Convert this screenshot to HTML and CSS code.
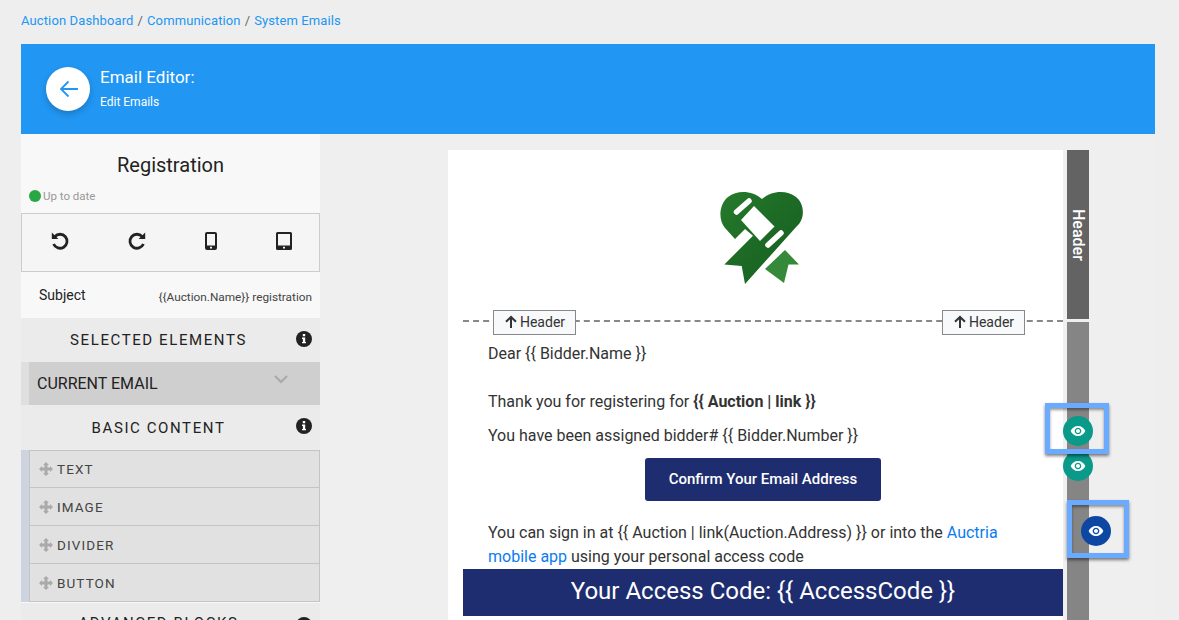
FILE: index.html
```html
<!DOCTYPE html>
<html lang="en">
<head>
  <meta charset="UTF-8">
  <title>Email Editor</title>
  <link rel="stylesheet" href="styles.css">
</head>
<body>
  <div class="breadcrumb">
    <a href="#">Auction Dashboard</a><span class="sep">/</span><a href="#">Communication</a><span class="sep">/</span><a href="#">System Emails</a>
  </div>

  <header class="banner">
    <a class="back" href="#">
      <svg width="18" height="18" viewBox="0 0 18 18" fill="none" stroke="#2196f3" stroke-width="1.800"><path d="M18 9H1.500M8.500 1.500L1 9l7.500 7.500"/></svg>
    </a>
    <div class="banner-text">
      <div class="banner-title">Email Editor:</div>
      <div class="banner-sub">Edit Emails</div>
    </div>
  </header>

  <div class="workspace">
    <aside class="sidebar">
      <h2 class="doc-name">Registration</h2>
      <div class="status"><span class="dot"></span>Up to date</div>
      <div class="toolbar">
        <svg width="20" height="20" viewBox="0 0 20 20" fill="none" stroke="#222" stroke-width="2.800"><path d="M4.800 5.600A7 7 0 1 1 3.600 13"/><path d="M1.800 1.500v6.600h6.600" stroke="none" fill="#222"/></svg>
        <svg width="20" height="20" viewBox="0 0 20 20" fill="none" stroke="#222" stroke-width="2.800"><path d="M15.200 5.600A7 7 0 1 0 16.400 13"/><path d="M18.200 1.500v6.600h-6.600" stroke="none" fill="#222"/></svg>
        <svg width="14" height="20" viewBox="0 0 14 20"><path fill="#222" fill-rule="evenodd" d="M3 1h8a2 2 0 0 1 2 2v14a2 2 0 0 1-2 2H3a2 2 0 0 1-2-2V3a2 2 0 0 1 2-2zm0 2v11.500h8V3zM6 15.800v1.700h2v-1.700z"/></svg>
        <svg width="18" height="20" viewBox="0 0 18 20"><path fill="#222" fill-rule="evenodd" d="M2.500 1h13A1.500 1.500 0 0 1 17 2.500v15a1.500 1.500 0 0 1-1.500 1.500h-13A1.500 1.500 0 0 1 1 17.500v-15A1.500 1.500 0 0 1 2.500 1zM3 3v11.500h12V3zM8 15.800v1.700h2v-1.700z"/></svg>
      </div>
      <div class="subject">
        <span>Subject</span>
        <span class="subject-value">{{Auction.Name}} registration</span>
      </div>

      <div class="section-head">
        <span>SELECTED ELEMENTS</span>
        <svg class="info" width="16" height="16" viewBox="0 0 16 16"><circle cx="8" cy="8" r="8" fill="#222"/><path fill="#fff" d="M6.800 3h2.400v2.200H6.800zM6 6.500h3.200v4.400H10v1.400H6v-1.400h.9V7.900H6z"/></svg>
      </div>
      <div class="current">
        <span>CURRENT EMAIL</span>
        <svg width="14" height="9" viewBox="0 0 14 9" fill="none" stroke="#aaa" stroke-width="2.200"><path d="M1 1l6 6 6-6"/></svg>
      </div>

      <div class="section-head">
        <span>BASIC CONTENT</span>
        <svg class="info" width="16" height="16" viewBox="0 0 16 16"><circle cx="8" cy="8" r="8" fill="#222"/><path fill="#fff" d="M6.800 3h2.400v2.200H6.800zM6 6.500h3.200v4.400H10v1.400H6v-1.400h.9V7.900H6z"/></svg>
      </div>
      <ul class="blocks">
        <li><svg class="move" width="14" height="14" viewBox="0 0 14 14"><path fill="#aaa" d="M7 0l3 3H8.500v2.500H11V4l3 3-3 3V8.500H8.500V11H10l-3 3-3-3h1.500V8.500H3V10L0 7l3-3v1.500h2.500V3H4z"/></svg>TEXT</li>
        <li><svg class="move" width="14" height="14" viewBox="0 0 14 14"><path fill="#aaa" d="M7 0l3 3H8.500v2.500H11V4l3 3-3 3V8.500H8.500V11H10l-3 3-3-3h1.500V8.500H3V10L0 7l3-3v1.500h2.500V3H4z"/></svg>IMAGE</li>
        <li><svg class="move" width="14" height="14" viewBox="0 0 14 14"><path fill="#aaa" d="M7 0l3 3H8.500v2.500H11V4l3 3-3 3V8.500H8.500V11H10l-3 3-3-3h1.500V8.500H3V10L0 7l3-3v1.500h2.500V3H4z"/></svg>DIVIDER</li>
        <li><svg class="move" width="14" height="14" viewBox="0 0 14 14"><path fill="#aaa" d="M7 0l3 3H8.500v2.500H11V4l3 3-3 3V8.500H8.500V11H10l-3 3-3-3h1.500V8.500H3V10L0 7l3-3v1.500h2.500V3H4z"/></svg>BUTTON</li>
      </ul>
      <div class="section-head section-last">
        <span>ADVANCED BLOCKS</span>
        <svg class="info" width="16" height="16" viewBox="0 0 16 16"><circle cx="8" cy="8" r="8" fill="#222"/><path fill="#fff" d="M6.800 3h2.400v2.200H6.800zM6 6.500h3.200v4.400H10v1.400H6v-1.400h.9V7.900H6z"/></svg>
      </div>
    </aside>

    <main class="canvas">
      <div class="email">
        <div class="email-logo">
          <svg width="84" height="94" viewBox="0 0 84 94">
            <defs>
              <linearGradient id="heart" x1="0" y1="0" x2="1" y2="1">
                <stop offset="0" stop-color="#267a2c"/>
                <stop offset="0.5" stop-color="#1c6a25"/>
                <stop offset="1" stop-color="#17601f"/>
              </linearGradient>
            </defs>
            <path fill="#348a3a" d="M65 59L79 73.500H68.500L64 92L45 78z"/>
            <path fill="url(#heart)" d="M15 48L5 37C-2 29 -1 13 8 6C18 -2 33 0 42 8C51 0 66 -2 76 6C85 13 85 28 77 35L25 93L21.700 75L4.300 73.500L33 44.700L25 38z"/>
            <path fill="#fff" d="M21 29L34 15L54.500 35.500L40 50z"/>
            <path fill="none" stroke="#fff" stroke-width="5.500" stroke-linecap="round" d="M16.500 21L29 10M48 54L61 42"/>
          </svg>
        </div>
        <div class="marker">
          <span class="marker-tag"><svg width="14" height="14" viewBox="0 0 14 14" fill="none" stroke="#333" stroke-width="2"><path d="M7 13V2M2 6.800L7 2l5 4.800"/></svg>Header</span>
          <span class="marker-tag"><svg width="14" height="14" viewBox="0 0 14 14" fill="none" stroke="#333" stroke-width="2"><path d="M7 13V2M2 6.800L7 2l5 4.800"/></svg>Header</span>
        </div>
        <div class="email-body">
          <p class="dear">Dear {{ Bidder.Name }}</p>
          <p class="thanks">Thank you for registering for <b>{{ Auction | link }}</b></p>
          <p class="assigned">You have been assigned bidder# {{ Bidder.Number }}</p>
          <a class="confirm" href="#">Confirm Your Email Address</a>
          <p class="signin">You can sign in at {{ Auction | link(Auction.Address) }} or into the <a href="#">Auctria mobile app</a> using your personal access code</p>
        </div>
        <div class="access-code">Your Access Code: {{ AccessCode }}</div>
      </div>
      <div class="rail">
        <div class="rail-header">Header</div>
        <div class="rail-body"></div>
      </div>
    </main>
  </div>

  <span class="eye eye-one"><svg width="16" height="16" viewBox="0 0 24 24"><path fill="#fff" fill-rule="evenodd" d="M12 4.500C7 4.500 2.730 7.610 1 12c1.730 4.390 6 7.500 11 7.500s9.270-3.110 11-7.500c-1.730-4.390-6-7.500-11-7.500zM12 17c-2.760 0-5-2.240-5-5s2.240-5 5-5 5 2.240 5 5-2.240 5-5 5zm0-8c-1.660 0-3 1.340-3 3s1.340 3 3 3 3-1.340 3-3-1.340-3-3-3z"/></svg></span>
  <span class="eye eye-two"><svg width="16" height="16" viewBox="0 0 24 24"><path fill="#fff" fill-rule="evenodd" d="M12 4.500C7 4.500 2.730 7.610 1 12c1.730 4.390 6 7.500 11 7.500s9.270-3.110 11-7.500c-1.730-4.390-6-7.500-11-7.500zM12 17c-2.760 0-5-2.240-5-5s2.240-5 5-5 5 2.240 5 5-2.240 5-5 5zm0-8c-1.660 0-3 1.340-3 3s1.340 3 3 3 3-1.340 3-3-1.340-3-3-3z"/></svg></span>
  <span class="eye eye-three"><svg width="16" height="16" viewBox="0 0 24 24"><path fill="#fff" fill-rule="evenodd" d="M12 4.500C7 4.500 2.730 7.610 1 12c1.730 4.390 6 7.500 11 7.500s9.270-3.110 11-7.500c-1.730-4.390-6-7.500-11-7.500zM12 17c-2.760 0-5-2.240-5-5s2.240-5 5-5 5 2.240 5 5-2.240 5-5 5zm0-8c-1.660 0-3 1.340-3 3s1.340 3 3 3 3-1.340 3-3-1.340-3-3-3z"/></svg></span>
  <span class="callout callout-one"></span>
  <span class="callout callout-two"></span>
</body>
</html>
```

FILE: styles.css
```css
html, body {
  height: 620px;
  overflow: hidden;
}

body {
  margin: 0;
  padding: 0 24px 0 21px;
  position: relative;
  background-color: #eeeeee;
  font-family: Roboto, "Liberation Sans", sans-serif;
  color: #333;
}

a {
  text-decoration: none;
}

.breadcrumb {
  height: 44px;
  display: flex;
  align-items: center;
  padding-bottom: 3px;
  box-sizing: border-box;
  font-size: 13px;
  letter-spacing: 0.12px;
}

.breadcrumb a {
  color: #2196f3;
}

.sep {
  margin: 0 4px;
  color: #666;
}

.banner {
  height: 90px;
  display: flex;
  align-items: center;
  gap: 10px;
  padding-left: 25px;
  background-color: #2196f3;
  color: white;
}

.back {
  width: 44px;
  height: 44px;
  border-radius: 50%;
  background: white;
  display: flex;
  align-items: center;
  justify-content: center;
  padding-left: 2px;
  box-sizing: border-box;
  box-shadow: 0 3px 6px rgba(0,0,0,0.2);
}

.banner-text {
  padding-bottom: 2px;
}

.banner-title {
  font-size: 17px;
  line-height: 20px;
  margin-bottom: 7px;
}

.banner-sub {
  font-size: 12px;
  line-height: 16px;
}

.workspace {
  display: flex;
  background-color: #efefef;
}

.sidebar {
  width: 299px;
  flex-shrink: 0;
  background-color: #f8f8f8;
}

.doc-name {
  margin: 0;
  padding-top: 18px;
  font-size: 20px;
  line-height: 26px;
  font-weight: 400;
  text-align: center;
  color: #222;
}

.status {
  display: flex;
  align-items: center;
  gap: 2px;
  height: 18px;
  margin-top: 9px;
  padding-left: 8px;
  font-size: 11.5px;
  color: #999;
}

.dot {
  width: 12px;
  height: 12px;
  border-radius: 50%;
  background-color: #28a745;
}

.toolbar {
  height: 59px;
  margin-top: 8px;
  box-sizing: border-box;
  border: 1px solid #cccccc;
  background-color: #f5f5f5;
  display: flex;
  align-items: center;
  gap: 57px;
  padding: 0 0 3px 28px;
}

.subject {
  height: 46px;
  display: flex;
  align-items: center;
  justify-content: space-between;
  padding: 0 8px 0 18px;
  font-size: 14px;
  color: #222;
}

.subject-value {
  font-size: 11.8px;
  padding-top: 3px;
  color: #444;
}

.section-head {
  height: 44px;
  position: relative;
  display: flex;
  align-items: center;
  justify-content: center;
  padding-right: 24px;
  background-color: #ebebeb;
  font-size: 15px;
  letter-spacing: 1.6px;
  color: #222;
}

.info {
  position: absolute;
  right: 8px;
  top: 13px;
}

.current {
  height: 43px;
  box-sizing: border-box;
  display: flex;
  align-items: center;
  justify-content: space-between;
  padding: 0 32px 0 8px;
  border-left: 8px solid #dfdfdf;
  background-color: #cfcfcf;
  font-size: 16px;
  color: #222;
}

.current svg {
  margin-bottom: 8px;
}

.current + .section-head {
  height: 45px;
}

.section-last {
  margin-top: 1px;
  height: 40px;
}

.section-last .info {
  top: 14px;
}

.blocks {
  list-style: none;
  margin: 0;
  border-left: 8px solid #cdd3df;
  padding: 0;
}

.blocks li {
  height: 38px;
  box-sizing: border-box;
  display: flex;
  align-items: center;
  gap: 4px;
  padding: 1px 0 0 9px;
  border: 1px solid #c4c4c4;
  border-top: 0;
  background-color: #e1e1e1;
  font-size: 13.5px;
  letter-spacing: 1.1px;
  color: #444;
}

.blocks li:first-child {
  padding-top: 0;
  border-top: 1px solid #c4c4c4;
}

.canvas {
  flex: 1;
  display: flex;
  gap: 4px;
  padding: 16px 0 0 128px;
}

.email {
  width: 615px;
  height: 480px;
  background: white;
}

.email-logo {
  height: 170px;
  display: flex;
  justify-content: center;
  padding-top: 41px;
  padding-left: 12px;
  box-sizing: border-box;
}

.marker {
  margin-left: 15px;
  border-top: 2px dashed #888;
  height: 0;
  display: flex;
  align-items: center;
  justify-content: space-between;
  padding: 0 38px 0 30px;
}

.marker-tag {
  height: 25px;
  width: 83px;
  box-sizing: border-box;
  display: flex;
  align-items: center;
  justify-content: center;
  gap: 2px;
  border: 1px solid #888;
  background-color: #f8f9fa;
  font-size: 14px;
  color: #333;
}

.email-body {
  padding: 20px 40px 0 40px;
  font-size: 16px;
  line-height: 24px;
  color: #333;
}

.email-body p {
  margin: 0;
}

.thanks {
  padding-top: 24px;
}

.assigned {
  padding-top: 10px;
}

.confirm {
  display: block;
  width: 236px;
  height: 43px;
  line-height: 43px;
  margin: 10px 0 20px 157px;
  border-radius: 3px;
  background-color: #1e2d6f;
  color: white;
  text-align: center;
  font-size: 15px;
  font-weight: 500;
}

.signin a {
  color: #0a7cf2;
}

.access-code {
  margin: 0 0 0 15px;
  height: 47px;
  line-height: 45px;
  background-color: #1e2d6f;
  color: white;
  text-align: center;
  font-size: 24px;
}

.rail {
  width: 22px;
}

.rail-header {
  height: 169px;
  background-color: #636363;
  color: white;
  writing-mode: vertical-rl;
  text-align: center;
  font-size: 16px;
  font-weight: 500;
  line-height: 22px;
}

.rail-body {
  margin-top: 3px;
  height: 320px;
  background-color: #858585;
}

/* overlays on top of the editor */
.eye {
  position: absolute;
  width: 30px;
  height: 30px;
  border-radius: 50%;
  background-color: #0a9a8a;
  display: flex;
  align-items: center;
  justify-content: center;
}

.eye-one { left: 1063px; top: 416px; }
.eye-two { left: 1063px; top: 451px; }
.eye-three { left: 1081px; top: 516px; background-color: #0d47a1; }

.callout {
  position: absolute;
  box-sizing: border-box;
  border: 5px solid #6aaaff;
  box-shadow: 0 2px 3px rgba(0,0,0,0.5), inset 0 2px 3px rgba(0,0,0,0.4);
}

.callout-one { left: 1045px; top: 403px; width: 64px; height: 51px; }
.callout-two { left: 1067px; top: 500px; width: 62px; height: 58px; }
```
